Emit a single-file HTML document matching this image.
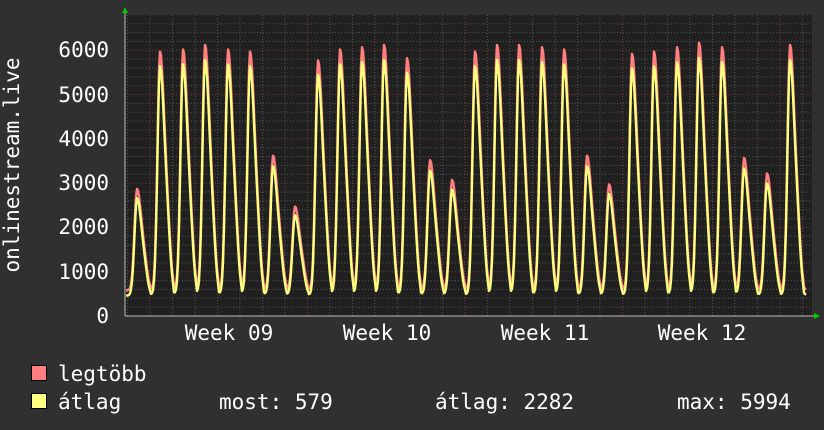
<!DOCTYPE html>
<html><head><meta charset="utf-8"><style>
html,body{margin:0;padding:0;background:#303030;}
svg{display:block}
text{font-family:"DejaVu Sans Mono","Liberation Mono",monospace;fill:#fff;font-size:21px}
</style></head><body>
<svg id="g" width="824" height="430" xmlns="http://www.w3.org/2000/svg">
<rect width="824" height="430" fill="#303030"/>
<rect x="125" y="15" width="687" height="301" fill="#202020"/>
<g id="grid"></g>
<path id="mx" fill="none" stroke="#ff7f7f" stroke-width="2.4" stroke-linejoin="round"/>
<path id="av" fill="none" stroke="#ffff7f" stroke-width="2.4" stroke-linejoin="round"/>
<line x1="125" y1="316" x2="816" y2="316" stroke="#bbb" stroke-width="1"/>
<line x1="125" y1="10" x2="125" y2="316" stroke="#bbb" stroke-width="1"/>
<polygon points="122,13 128,13 125,7" fill="#00cc00"/>
<polygon points="814,313 814,319 820,316" fill="#00cc00"/>
<g text-anchor="end">
<text x="109" y="57">6000</text><text x="109" y="102">5000</text><text x="109" y="146">4000</text>
<text x="109" y="190">3000</text><text x="109" y="234">2000</text><text x="109" y="279">1000</text>
<text x="109" y="323">0</text></g>
<g text-anchor="middle">
<text x="229" y="340">Week 09</text><text x="387" y="340">Week 10</text>
<text x="545" y="340">Week 11</text><text x="702" y="340">Week 12</text></g>
<text transform="translate(19,165) rotate(-90)" text-anchor="middle">onlinestream.live</text>
<rect x="31.5" y="365.5" width="15" height="15" fill="#ff7f7f" stroke="#000"/>
<rect x="31.5" y="393.5" width="15" height="15" fill="#ffff7f" stroke="#000"/>
<text x="58" y="381">legtöbb</text>
<text x="58" y="409">átlag</text>
<text x="219" y="409">most: 579</text>
<text x="435" y="409">átlag: 2282</text>
<text x="677" y="409">max: 5994</text>
</svg>
<script>
var g=document.getElementById('grid'),s='';
for(var i=1;i<34;i++){var y=316-i*8.857;if(y<15)break;var maj=i%5==0;
s+='<line x1="125" x2="812" y1="'+y+'" y2="'+y+'" stroke="'+(maj?'#7a3a3a':'#555')+'" stroke-dasharray="1,2"/>';}
for(var x=127.5;x<812;x+=22.5){var maj=Math.abs(((x-150)%157.5+157.5)%157.5)<1;
s+='<line y1="15" y2="316" x1="'+x+'" x2="'+x+'" stroke="'+(maj?'#7a3a3a':'#555')+'" stroke-dasharray="1,2"/>';}
g.innerHTML=s;
var P=[[137,2850],[160,5950],[183,6000],[205,6100],[228,6000],[250,5950],[273,3600],[295,2450],[318,5750],[340,6000],[362,6050],[384,6100],[407,5800],[430,3500],[452,3050],[475,5950],[497,6100],[519,6100],[542,6050],[564,6000],[587,3600],[609,2950],[632,5900],[654,5950],[677,6050],[699,6150],[722,6050],[744,3550],[767,3200],[790,6100]];
function val(x,k){var v=480*k;for(var j=0;j<P.length;j++){var d=x-P[j][0];var w=d<0?3.6:6;var h=((P[j][1]-80)*k-480*k);v+=h*Math.exp(-Math.pow(d/w,2)*(d<0?1:0.8));
if(d>0&&d<14)v+=h*0.14*Math.exp(-Math.pow((d-8)/4,2));}
return v;}
function path(k,off){var d='';for(var x=126;x<=806;x+=1){var v=val(x,k)+off;var y=316-v*0.04429;d+=(d?'L':'M')+x+','+y.toFixed(1);}return d;}
document.getElementById('mx').setAttribute('d',path(1,100));
document.getElementById('av').setAttribute('d',path(0.96,0));
</script>
</body></html>
